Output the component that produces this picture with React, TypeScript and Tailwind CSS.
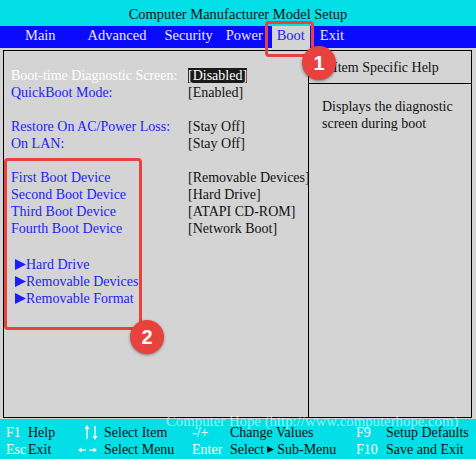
import React from "react";

const serif = { fontFamily: '"Liberation Serif", "Times New Roman", serif' };

function Row({ label, value, selected = false }: { label: string; value: string; selected?: boolean }) {
  return (
    <div className="flex h-[17px] items-center">
      <div className={`w-[177px] shrink-0 whitespace-nowrap ${selected ? "text-white" : "text-[#1c1cff]"}`}>{label}</div>
      <div className="shrink-0 whitespace-nowrap text-[#111]">
        {selected ? <span className="bg-[#1a1a1a] text-white">{value}</span> : value}
      </div>
    </div>
  );
}

function Sub({ label }: { label: string }) {
  return (
    <div className="flex h-[17px] items-center whitespace-nowrap pl-[4px] text-[#1c1cff]">
      <svg width="11" height="11" viewBox="0 0 11 11" className="mr-[0px] shrink-0">
        <polygon points="0,0 11,5.5 0,11" fill="#1c1cff" />
      </svg>
      <span>{label}</span>
    </div>
  );
}

export default function App() {
  return (
    <div className="relative flex h-[459px] w-[476px] flex-col overflow-hidden bg-[#d4d4d4] text-[14px] leading-none" style={serif}>
      {/* title */}
      <div className="flex h-[26px] items-center justify-center bg-[#03dfe6] pt-[2px] text-[14.5px] text-[#111]">
        Computer Manufacturer Model Setup
      </div>
      {/* menu */}
      <div className="flex h-[22px] items-stretch bg-[#0a0aff] pb-[3px] text-[14.5px] text-[#e8e8e8]">
        <div className="ml-[25px] flex items-center">Main</div>
        <div className="ml-[32px] flex items-center">Advanced</div>
        <div className="ml-[18px] flex items-center">Security</div>
        <div className="ml-[13px] flex items-center">Power</div>
        <div className="-mb-[3px] ml-[9px] flex w-[38px] items-center justify-center bg-[#d4d4d4] pb-[3px] text-[#2222ff]">Boot</div>
        <div className="ml-[10px] flex items-center">Exit</div>
      </div>
      {/* main */}
      <div className="flex flex-1 pb-[1px] pl-[3px] pr-[4px] pt-[2px]">
        <div className="flex flex-1 border border-black">
          <div className="flex w-[305px] flex-col border-r border-black pl-[7px] pt-[16px]">
            <Row label="Boot-time Diagnostic Screen:" value="[Disabled]" selected />
            <Row label="QuickBoot Mode:" value="[Enabled]" />
            <div className="h-[17px]" />
            <Row label="Restore On AC/Power Loss:" value="[Stay Off]" />
            <Row label="On LAN:" value="[Stay Off]" />
            <div className="h-[17px]" />
            <Row label="First Boot Device" value="[Removable Devices]" />
            <Row label="Second Boot Device" value="[Hard Drive]" />
            <Row label="Third Boot Device" value="[ATAPI CD-ROM]" />
            <Row label="Fourth Boot Device" value="[Network Boot]" />
            <div className="h-[19px]" />
            <Sub label="Hard Drive" />
            <Sub label="Removable Devices" />
            <Sub label="Removable Format" />
          </div>
          <div className="flex flex-1 flex-col">
            <div className="flex h-[33px] items-center border-b border-black pl-[24px] pt-[2px] text-[#111]">Item Specific Help</div>
            <div className="pl-[13px] pt-[15px] text-[#111] leading-[16.5px]">
              Displays the diagnostic
              <br />
              screen during boot
            </div>
          </div>
        </div>
      </div>
      {/* footer */}
      <div className="flex h-[40px] flex-col justify-center bg-[#03dfe6] pt-[4px] text-[14px] text-[#111]">
        <div className="flex h-[17px] items-center">
          <span className="ml-[6px] w-[22px] text-white">F1</span>
          <span className="w-[50px]">Help</span>
          <span className="flex w-[26px] items-center pl-[6px]">
            <svg width="14" height="15" viewBox="0 0 14 15">
              <g stroke="white" strokeWidth="1.3" fill="none">
                <line x1="3" y1="3" x2="3" y2="14" />
                <line x1="11" y1="1" x2="11" y2="12" />
              </g>
              <polygon points="0.5,4 3,0 5.5,4" fill="white" />
              <polygon points="8.5,11 11,15 13.5,11" fill="white" />
            </svg>
          </span>
          <span className="w-[88px]">Select Item</span>
          <span className="w-[38px] text-white">-/+</span>
          <span className="w-[126px]">Change Values</span>
          <span className="w-[30px] text-white">F9</span>
          <span>Setup Defaults</span>
        </div>
        <div className="flex h-[17px] items-center">
          <span className="ml-[6px] w-[22px] text-white">Esc</span>
          <span className="w-[50px]">Exit</span>
          <span className="flex w-[26px] items-center">
            <svg width="19" height="6" viewBox="0 0 19 6">
              <g stroke="white" strokeWidth="1.3">
                <line x1="2" y1="3" x2="8" y2="3" />
                <line x1="11" y1="3" x2="17" y2="3" />
              </g>
              <polygon points="0,3 3.5,0.5 3.5,5.5" fill="white" />
              <polygon points="19,3 15.5,0.5 15.5,5.5" fill="white" />
            </svg>
          </span>
          <span className="w-[88px]">Select Menu</span>
          <span className="w-[38px] text-white">Enter</span>
          <span className="flex w-[126px] items-center whitespace-nowrap">
            Select
            <svg width="7" height="7" viewBox="0 0 7 7" className="mx-[3px]">
              <polygon points="0,0 7,3.5 0,7" fill="#111" />
            </svg>
            Sub-Menu
          </span>
          <span className="w-[30px] text-white">F10</span>
          <span>Save and Exit</span>
        </div>
      </div>
      {/* watermark */}
      <div className="pointer-events-none absolute left-[166px] top-[414px] whitespace-nowrap text-[14.8px] text-white opacity-55">
        Computer Hope (http://www.computerhope.com)
      </div>
      {/* annotations */}
      <div className="pointer-events-none absolute left-[265px] top-[21px] h-[36px] w-[49px] rounded-[4px] border-[3px] border-[#e8423f]" />
      <div className="pointer-events-none absolute left-[302px] top-[46px] flex h-[34px] w-[34px] items-center justify-center rounded-full bg-[#e8423f] text-[20px] font-bold text-white shadow-[0_1px_3px_rgba(0,0,0,0.45)]" style={{ fontFamily: '"Liberation Sans", Arial, sans-serif' }}>1</div>
      <div className="pointer-events-none absolute left-[4px] top-[158px] h-[172px] w-[138px] rounded-[4px] border-[3px] border-[#e8423f]" />
      <div className="pointer-events-none absolute left-[130px] top-[320px] flex h-[34px] w-[34px] items-center justify-center rounded-full bg-[#e8423f] text-[20px] font-bold text-white shadow-[0_1px_3px_rgba(0,0,0,0.45)]" style={{ fontFamily: '"Liberation Sans", Arial, sans-serif' }}>2</div>
    </div>
  );
}
